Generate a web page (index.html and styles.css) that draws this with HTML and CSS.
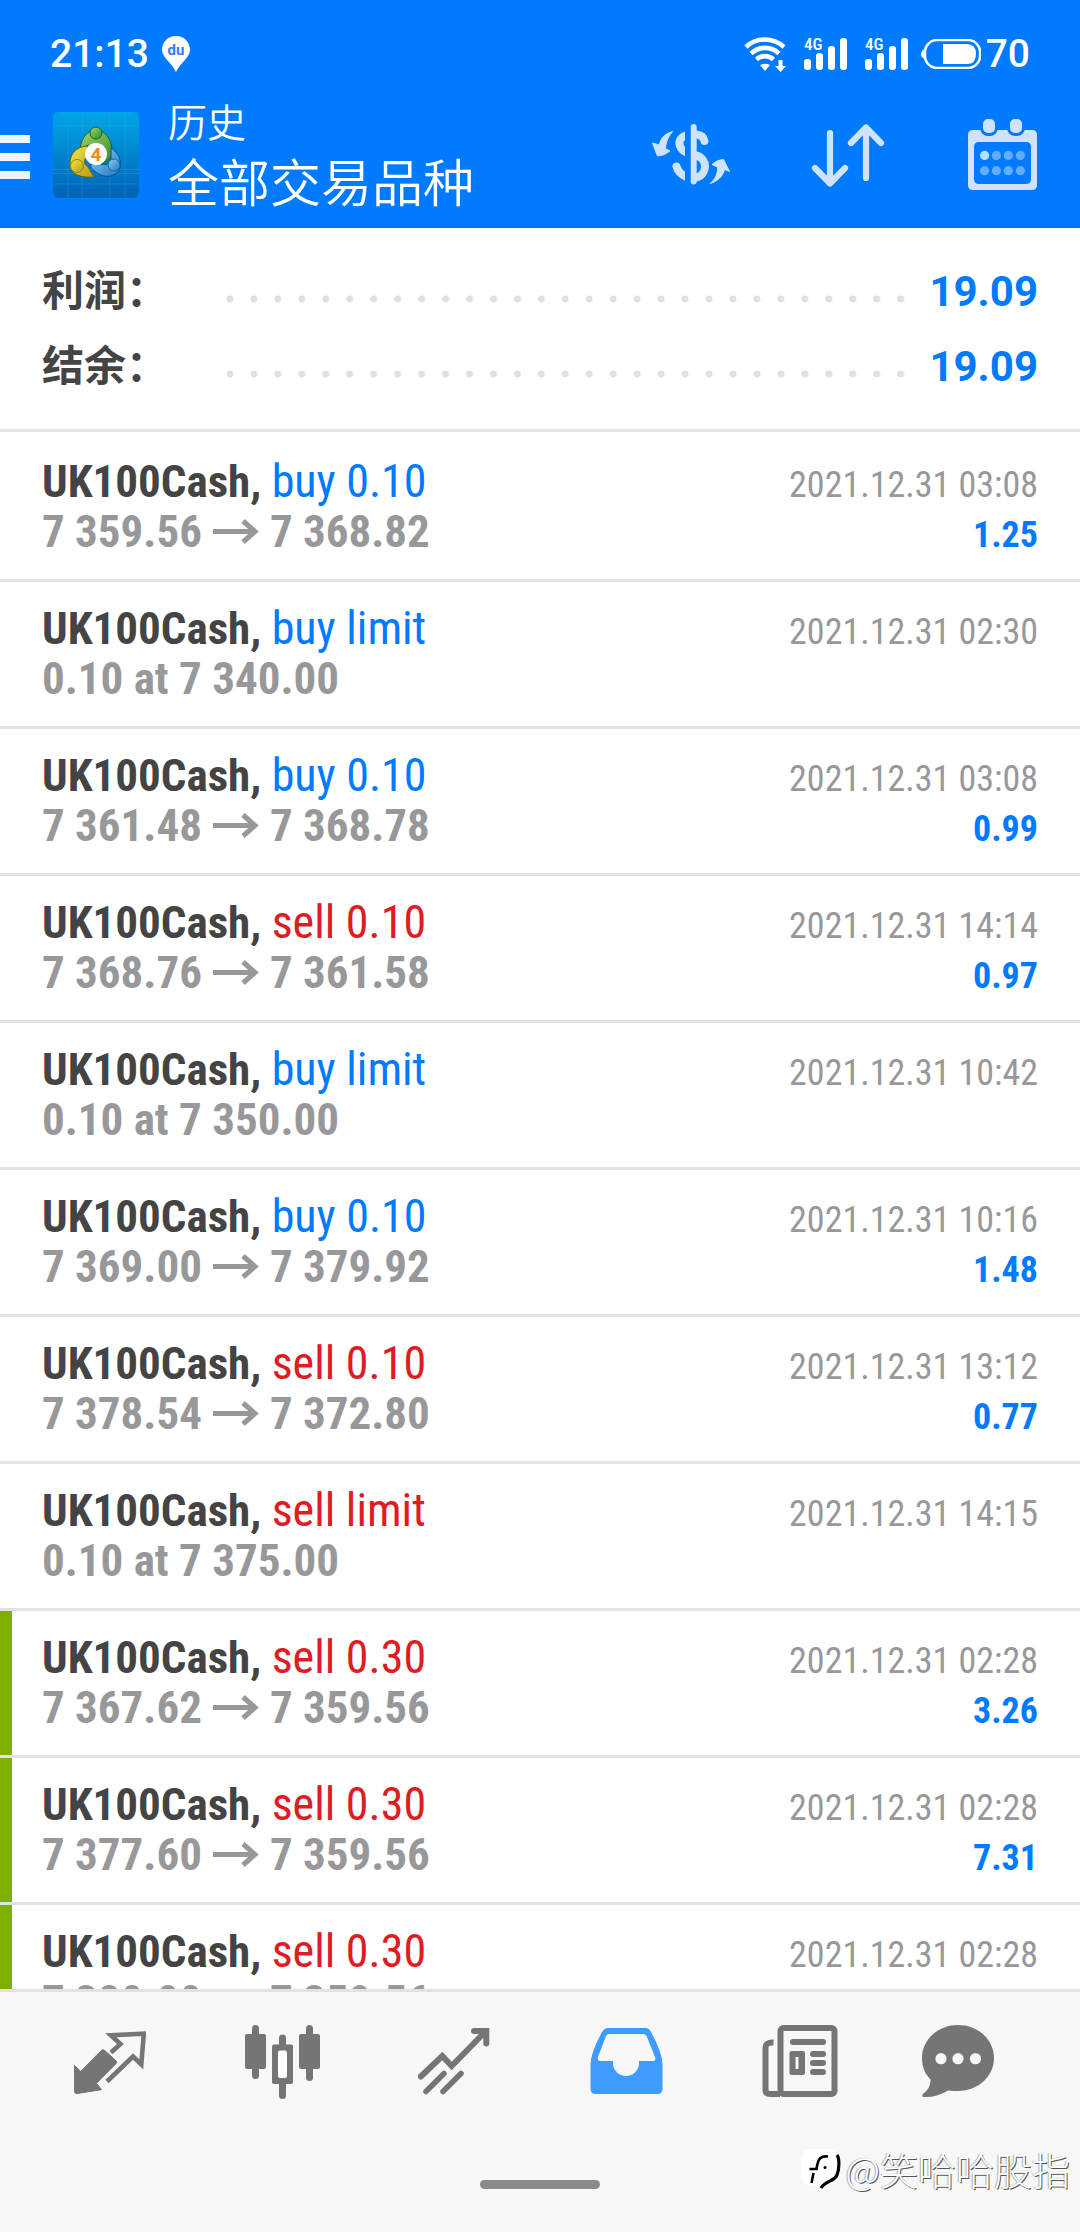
FILE: index.html
```html
<!DOCTYPE html>
<html lang="zh-CN">
<head>
<meta charset="utf-8">
<meta name="viewport" content="width=device-width, initial-scale=1">
<title>历史</title>
<link rel="stylesheet" href="styles.css">
</head>
<body>
<header class="header">
  <div class="status">
    <span class="clock">21:13</span>
    <svg class="pin" width="28" height="36" viewBox="0 0 28 36" aria-hidden="true">
      <path d="M14 0C6 0 0 6 0 14C0 21 9 26 14 36C19 26 28 21 28 14C28 6 22 0 14 0Z" fill="#fff"/>
      <text x="14" y="19" text-anchor="middle" class="pin-text">du</text>
    </svg>
    <div class="indicators">
      <svg width="42" height="36" viewBox="0 0 42 36" fill="none" stroke="#fff" stroke-width="4.6" aria-hidden="true">
        <path d="M2 11C12 1 29 1 40 11M7 17.500C15 10 27 10 35 17.500M12.500 23.500C17.500 19 24.500 19 29.500 23.500"/>
        <path d="M16 29Q21 26.500 26 29L21 35Z" fill="#fff" stroke="none"/>
        <path d="M34.500 24h4v6h3.500l-5.500 6-5.500-6h3.500z" fill="#fff" stroke="none"/>
      </svg>
      <svg class="signal" width="43" height="36" viewBox="0 0 43 36" fill="#fff" aria-hidden="true">
        <text x="0" y="14" class="net-text">4G</text>
        <rect x="0" y="23" width="7" height="11" rx="3"/><rect x="12" y="17" width="7" height="17" rx="3"/><rect x="24" y="10" width="7" height="24" rx="3"/><rect x="36" y="2" width="7" height="32" rx="3"/>
      </svg>
      <svg class="signal" width="43" height="36" viewBox="0 0 43 36" fill="#fff" aria-hidden="true">
        <text x="0" y="14" class="net-text">4G</text>
        <rect x="0" y="23" width="7" height="11" rx="3"/><rect x="12" y="17" width="7" height="17" rx="3"/><rect x="24" y="10" width="7" height="24" rx="3"/><rect x="36" y="2" width="7" height="32" rx="3"/>
      </svg>
      <div class="battery">
        <svg width="60" height="30" viewBox="0 0 60 30" aria-hidden="true">
          <path d="M4 10V20C1 19 0 17 0 15C0 13 1 11 4 10Z" fill="#fff"/>
          <rect x="4" y="1" width="55" height="28" rx="12" fill="none" stroke="#fff" stroke-width="2.500"/>
          <path d="M22 5H46Q55 5 55 15T46 25H22Z" fill="#fff"/>
        </svg>
        <span>70</span>
      </div>
    </div>
  </div>
  <div class="toolbar">
    <button class="menu" aria-label="菜单"><span></span><span></span><span></span></button>
    <svg class="app" width="86" height="86" viewBox="0 0 86 86" aria-hidden="true">
      <defs>
        <linearGradient id="bg" x1="0" y1="0" x2="0" y2="1"><stop offset="0" stop-color="#00a5e8"/><stop offset=".45" stop-color="#0089cf"/><stop offset="1" stop-color="#0062b8"/></linearGradient>
        <linearGradient id="gr" x1="0" y1="0" x2="1" y2="1"><stop offset="0" stop-color="#a5d86a"/><stop offset="1" stop-color="#2f8a2c"/></linearGradient>
        <linearGradient id="ye" x1="0" y1="0" x2="1" y2="1"><stop offset="0" stop-color="#f4e94a"/><stop offset="1" stop-color="#b99a14"/></linearGradient>
        <linearGradient id="bl" x1="0" y1="0" x2="1" y2="1"><stop offset="0" stop-color="#8fd0f5"/><stop offset="1" stop-color="#1f78c4"/></linearGradient>
      </defs>
      <rect width="86" height="86" rx="6" fill="url(#bg)"/>
      <path d="M0 14H86M0 57.500H86M0 61.500H86M0 72H86M15 0V86M29 0V86M57 0V86M72 0V86" stroke="#3fb4ea" stroke-opacity=".25"/>
      <path d="M27 40C27 27 34 18 43 18C53 18 60 29 59 42C57 47 52 51 48 52L36 33C32 34 29 37 27 40Z" fill="url(#gr)" stroke="#175f35"/>
      <path d="M34 34C22 35 17 43 17 52C17 62 27 66 41 65L35 55C30 52 30 46 36 44Z" fill="url(#ye)" stroke="#6b6410"/>
      <path d="M58 36C68 42 70 54 64 61C56 67 45 65 37 54L44 49C50 55 57 53 58 46Z" fill="url(#bl)" stroke="#0c4c86"/>
      <circle cx="43" cy="21" r="6" fill="url(#gr)" stroke="#175f35"/>
      <circle cx="24" cy="54" r="6.500" fill="url(#ye)" stroke="#8f8116"/>
      <circle cx="61" cy="53" r="6" fill="url(#bl)" stroke="#1767a8"/>
      <circle cx="43" cy="42" r="11" fill="#fff"/>
      <text x="43" y="49" text-anchor="middle" class="app-text">4</text>
    </svg>
    <div class="titles">
      <span class="subtitle">历史</span>
      <h1>全部交易品种</h1>
    </div>
    <div class="actions">
      <button aria-label="货币">
        <svg width="78" height="72" viewBox="0 0 78 72" fill="none" stroke="#cfe3ff" stroke-width="8" stroke-linecap="round">
          <clipPath id="half"><rect width="33" height="72"/></clipPath>
          <path d="M41.700 8V62.500" stroke-width="6"/>
          <path d="M44 15.500C49 16 52 18.500 52.500 22M44 36.500C56 39 56 56 44 58.500" />
          <g clip-path="url(#half)"><path d="M37 15.500C24 18 24 30 38 35M24.500 47.500C26 53 30 56.500 36 58.500"/></g>
          <g fill="#cfe3ff" stroke="#cfe3ff" stroke-width="1" stroke-linejoin="round">
            <path d="M20.500 12.500C12 15 8 20 7.500 26L.5 24L5.500 37Q12 37 18 32L13.500 29.500C14 23 16 18 20.500 12.500Z"/>
            <path d="M58.500 64.500C66 62 71 57 72.500 50.500L77.500 52.500L71.500 40.500Q65 40.500 60 45.500L65.500 48C66 55 63 60 58.500 64.500Z"/>
          </g>
        </svg>
      </button>
      <button aria-label="排序">
        <svg width="76" height="72" viewBox="0 0 76 72" fill="none" stroke="#cfe3ff" stroke-width="6.200" stroke-linecap="round" stroke-linejoin="round">
          <path d="M19 14V64M4 49L19 64.500L34 49M55 59V9M40 24L55 8.500L70 24"/>
        </svg>
      </button>
      <button aria-label="日历">
        <svg width="70" height="72" viewBox="0 0 70 72">
          <path fill="#cfe3ff" fill-rule="evenodd" d="M5 11H64Q69 11 69 16V66Q69 71 64 71H5Q0 71 0 66V16Q0 11 5 11ZM11 23Q6 23 6 28V60Q6 65 11 65H58Q63 65 63 60V28Q63 23 58 23Z"/>
          <g fill="#cfe3ff" stroke="#007aff" stroke-width="6" paint-order="stroke"><rect x="15" y="0" width="12" height="14" rx="5"/><rect x="42" y="0" width="12" height="14" rx="5"/></g>
          <g fill="#62adff"><circle cx="28.400" cy="36.400" r="4.600"/><circle cx="40.300" cy="36.400" r="4.600"/><circle cx="52.400" cy="36.400" r="4.600"/><circle cx="16.600" cy="51.700" r="4.600"/><circle cx="28.400" cy="51.700" r="4.600"/><circle cx="40.300" cy="51.700" r="4.600"/><circle cx="52.400" cy="51.700" r="4.600"/></g>
          <circle cx="16.600" cy="36.400" r="4.600" fill="#b5e0ff"/>
        </svg>
      </button>
    </div>
  </div>
</header>

<main class="content">
  <dl class="summary">
    <div class="total"><dt>利润：</dt><span class="leader"></span><dd>19.09</dd></div>
    <div class="total"><dt>结余：</dt><span class="leader"></span><dd>19.09</dd></div>
  </dl>
  <svg width="0" height="0" class="defs" aria-hidden="true">
    <symbol id="arrow" viewBox="0 0 46 26"><path d="M0 12.500H42M30 2L42 12.500L30 23" fill="none" stroke="#98989b" stroke-width="5"/></symbol>
  </svg>
  <ul class="deals">
    <li class="deal"><div class="symbol">UK100Cash, <span class="buy">buy 0.10</span></div><time>2021.12.31 03:08</time><div class="price">7 359.56<svg class="to"><use href="#arrow"/></svg>7 368.82</div><div class="profit">1.25</div></li>
    <li class="deal"><div class="symbol">UK100Cash, <span class="buy">buy limit</span></div><time>2021.12.31 02:30</time><div class="price">0.10 at 7 340.00</div></li>
    <li class="deal"><div class="symbol">UK100Cash, <span class="buy">buy 0.10</span></div><time>2021.12.31 03:08</time><div class="price">7 361.48<svg class="to"><use href="#arrow"/></svg>7 368.78</div><div class="profit">0.99</div></li>
    <li class="deal"><div class="symbol">UK100Cash, <span class="sell">sell 0.10</span></div><time>2021.12.31 14:14</time><div class="price">7 368.76<svg class="to"><use href="#arrow"/></svg>7 361.58</div><div class="profit">0.97</div></li>
    <li class="deal"><div class="symbol">UK100Cash, <span class="buy">buy limit</span></div><time>2021.12.31 10:42</time><div class="price">0.10 at 7 350.00</div></li>
    <li class="deal"><div class="symbol">UK100Cash, <span class="buy">buy 0.10</span></div><time>2021.12.31 10:16</time><div class="price">7 369.00<svg class="to"><use href="#arrow"/></svg>7 379.92</div><div class="profit">1.48</div></li>
    <li class="deal"><div class="symbol">UK100Cash, <span class="sell">sell 0.10</span></div><time>2021.12.31 13:12</time><div class="price">7 378.54<svg class="to"><use href="#arrow"/></svg>7 372.80</div><div class="profit">0.77</div></li>
    <li class="deal"><div class="symbol">UK100Cash, <span class="sell">sell limit</span></div><time>2021.12.31 14:15</time><div class="price">0.10 at 7 375.00</div></li>
    <li class="deal marked"><div class="symbol">UK100Cash, <span class="sell">sell 0.30</span></div><time>2021.12.31 02:28</time><div class="price">7 367.62<svg class="to"><use href="#arrow"/></svg>7 359.56</div><div class="profit">3.26</div></li>
    <li class="deal marked"><div class="symbol">UK100Cash, <span class="sell">sell 0.30</span></div><time>2021.12.31 02:28</time><div class="price">7 377.60<svg class="to"><use href="#arrow"/></svg>7 359.56</div><div class="profit">7.31</div></li>
    <li class="deal marked"><div class="symbol">UK100Cash, <span class="sell">sell 0.30</span></div><time>2021.12.31 02:28</time><div class="price">7 380.00<svg class="to"><use href="#arrow"/></svg>7 359.56</div></li>
  </ul>
</main>

<footer class="footer">
  <nav class="tabs">
    <button aria-label="行情">
      <svg width="72" height="75" viewBox="0 0 72 75"><path fill="#757575" stroke="#757575" stroke-width="1" stroke-linejoin="round" d="M.5 41.500L6.700 47.300L27.500 26.300Q29 25 30.500 26.300L42 36.800Q43.300 38.300 42 39.700L22.500 59.300L27.500 65.700L3 69.500Q.5 69.700 .5 67.500Z"/><path fill="none" stroke="#757575" stroke-width="4.600" d="M37 28.500L46.500 20L36.800 11.200L69.800 9.600L67.300 40.500L59 32.500L33 57.500"/></svg>
    </button>
    <button aria-label="图表">
      <svg width="75" height="75" viewBox="0 0 75 75" fill="#757575"><rect y="10" width="21" height="35" rx="2"/><rect x="7" y="1" width="7" height="54" rx="3.500"/><rect x="54" y="10" width="21" height="35" rx="2"/><rect x="61" y="1" width="7" height="56" rx="3.500"/><rect x="27" y="20.500" width="21" height="39.500" rx="2"/><rect x="34" y="10.500" width="7" height="64.500" rx="3.500"/><rect x="33" y="26.500" width="9" height="27.500" rx="2" fill="#fff"/></svg>
    </button>
    <button aria-label="交易">
      <svg width="72" height="75" viewBox="0 0 72 75" fill="none" stroke="#757575" stroke-width="6"><path d="M2.800 52.500L24.300 32L33.700 42L67 8" stroke-linecap="round"/><path d="M56 7H68.300V19.500" stroke-linecap="round"/><path d="M8 67.500L26 49.500M25 67.500L43 49.500" stroke-linecap="round" stroke-width="5.500"/></svg>
    </button>
    <button aria-label="历史" aria-current="page">
      <svg width="73" height="75" viewBox="0 0 73 75"><path fill="#409bff" fill-rule="evenodd" d="M18 4H55.500Q59 4 61 8Q72 28 72.500 40V65Q72.500 70 67.500 70H5.500Q.5 70 .5 65V40Q1 28 12 8Q14.500 4 18 4ZM19 10Q17 10 16 12L8 33Q7 37 10 37H23V39A13 13 0 0 0 49 39V37H63Q66.500 37 65 33L57 13Q56 10 53 10Z"/></svg>
    </button>
    <button aria-label="新闻">
      <svg width="80" height="75" viewBox="-4 0 80 75" fill="#757575"><rect x="18.500" y="4" width="54" height="66" rx="3" fill="none" stroke="#757575" stroke-width="6"/><path d="M11.500 18.500Q3.500 18 3.500 24V66Q3.500 70 8 70H18" fill="none" stroke="#757575" stroke-width="6"/><rect x="28" y="15" width="36" height="6" rx="3"/><path fill-rule="evenodd" d="M30 27H41Q43 27 43 29V49Q43 51 41 51H30Q27.500 51 27.500 49V29Q27.500 27 30 27ZM33.500 33V45H36.500V33Z"/><rect x="48" y="27" width="16" height="6" rx="3"/><rect x="48" y="36" width="16" height="6" rx="3"/><rect x="48" y="45" width="16" height="6" rx="3"/></svg>
    </button>
    <button aria-label="消息">
      <svg width="96" height="75" viewBox="0 0 96 75"><path fill="#757575" d="M36 1C56 1 72 15.500 72 34C72 52.500 56 67 36 67Q31 67 26 66.500Q14 74 1 73Q-.5 72 1 70Q9 64 8.500 55.500C3 50 0 43 0 34C0 15.500 16 1 36 1Z"/><g fill="#f7f7f7"><circle cx="19" cy="34.700" r="5.600"/><circle cx="36" cy="34.700" r="5.600"/><circle cx="53.500" cy="34.700" r="5.600"/></g></svg>
    </button>
  </nav>
  <div class="home"></div>
  <div class="watermark">
    <svg width="42" height="46" viewBox="0 0 42 46" aria-hidden="true"><rect x="0" y="3" width="37" height="37" rx="10" fill="#fff"/><path d="M27 10.500C19 9.500 17 13 15.500 23H8.500M12.500 27L10.500 37" fill="none" stroke="#000" stroke-width="2.600"/><circle cx="24" cy="21.500" r="1.500"/><path d="M36 9C39 13 38 24 36 29C33 36 25 34 20 42" fill="none" stroke="#000" stroke-width="3.200"/></svg>
    <span>@笑哈哈股指</span>
  </div>
</footer>
</body>
</html>
```
FILE: styles.css
```css
* { box-sizing: border-box; }

body {
  margin: 0;
  height: 100vh;
  display: flex;
  flex-direction: column;
  background: #fff;
  color: #444;
  font-family: Roboto, "Noto Sans CJK SC", sans-serif;
  overflow: hidden;
}

button {
  border: 0;
  padding: 0;
  background: none;
  display: block;
}

svg { display: block; }

h1, dl, dd, ul { margin: 0; padding: 0; }

/* Header */
.header {
  background: #007aff;
  color: #fff;
  border-bottom: 2px solid #0074f0;
}

.status {
  display: flex;
  align-items: center;
  height: 84px;
  padding: 24px 50px 0;
  font-size: 39px;
  font-weight: 500;
}

.pin { margin-left: 13px; }
.pin-text { font: 700 15px Roboto, sans-serif; fill: #2f7bff; }
.net-text { font: 500 17px "Roboto Condensed", sans-serif; }
.app-text { font: 700 19px Roboto, sans-serif; fill: #f08a24; }

.indicators {
  display: flex;
  align-items: center;
  gap: 18px;
  margin-left: auto;
}

.battery {
  display: flex;
  align-items: center;
  gap: 5px;
  margin-left: -5px;
}

.toolbar {
  display: flex;
  align-items: center;
  height: 142px;
  padding-right: 42px;
}

.menu {
  display: grid;
  gap: 10px;
  width: 30px;
  padding-top: 4px;
}

.menu span { height: 8px; background: #ebf4ff; }

.app { margin-left: 23px; }

.titles {
  display: grid;
  margin-left: 29px;
  padding-bottom: 6px;
  font-family: "Noto Sans CJK SC", sans-serif;
  font-weight: 350;
}

.subtitle { font-size: 39px; line-height: 57px; }
h1 { font-size: 51px; line-height: 63px; font-weight: inherit; }

.actions {
  display: flex;
  gap: 81px;
  margin-left: auto;
}

/* Summary */
.content {
  flex: 1;
  min-height: 0;
  overflow: hidden;
}

.summary {
  padding: 26px 42px 25px;
  border-bottom: 3px solid #e2e2e2;
}

.total {
  display: flex;
  align-items: center;
  height: 75px;
  font-size: 42px;
  font-weight: 700;
}

dt {
  width: 176px;
  padding-bottom: 8px;
  font-family: "Noto Sans CJK SC", sans-serif;
}

dd { color: #007aff; }

.leader {
  flex: 1;
  height: 8px;
  margin: 14px 16px 0 0;
  background: radial-gradient(circle, #e0e0e0 3px, transparent 4px) 0 0 / 24px 8px round;
}

/* Deals */
.defs { position: absolute; }

.deals { list-style: none; padding-top: 3px; }

.deal {
  display: grid;
  grid-template-columns: 1fr auto;
  align-items: baseline;
  align-content: start;
  height: 147px;
  padding: 21px 42px 0;
  border-bottom: 3px solid #e2e2e2;
  font: 700 45px/50px "Roboto Condensed", sans-serif;
}

.marked {
  background: linear-gradient(#7eb000, #7eb000) 0 0 / 12px 100% no-repeat padding-box;
}

.buy, .sell { font-size: 46px; font-weight: 400; }
.buy, .profit { color: #007aff; }
.sell { color: #de1c22; }

.price { display: flex; align-items: center; color: #98989b; }
.to { width: 46px; height: 26px; margin: 0 11px; }

time, .profit { font-size: 36px; line-height: 44px; text-align: right; }
time { font-weight: 400; color: #98989b; }

/* Footer */
.footer {
  position: relative;
  height: 243px;
  padding-top: 32px;
  background: #f7f7f7;
  border-top: 3px solid #e2e2e2;
}

.tabs {
  display: grid;
  grid-template-columns: repeat(6, 1fr);
  justify-items: center;
  padding: 0 24px;
}

.home {
  width: 120px;
  height: 9px;
  margin: 81px auto 0;
  border-radius: 5px;
  background: #8a8a8a;
}

.watermark {
  position: absolute;
  right: 10px;
  bottom: 38px;
  display: flex;
  align-items: center;
  gap: 2px;
  font: 300 38px/50px "Noto Sans CJK SC", sans-serif;
  color: #fff;
  text-shadow: 1px 1px 0 #555, -1px 0 1px #aaa;
}
```
